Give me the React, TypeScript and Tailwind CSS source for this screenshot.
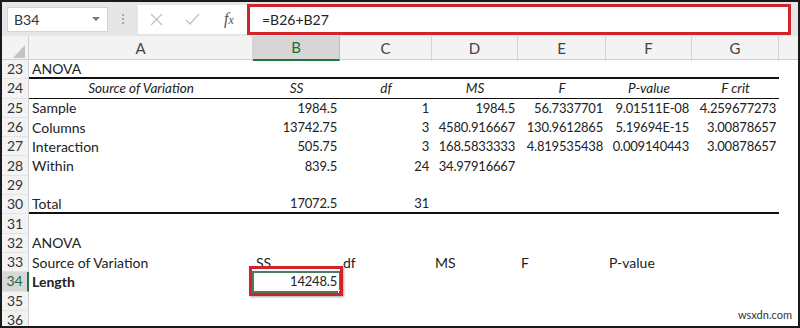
import React from 'react';

type Cell = {
  text?: string;
  align?: 'left' | 'right' | 'center';
  italic?: boolean;
  bold?: boolean;
};

type Row = {
  num: number;
  cells: Cell[]; // A..G
  border?: 'thick' | 'thin';
};

const L = (text: string, extra: Partial<Cell> = {}): Cell => ({ text, align: 'left', ...extra });
const R = (text: string): Cell => ({ text, align: 'right' });
const H = (text: string): Cell => ({ text, align: 'center', italic: true });
const E: Cell = {};

const rows: Row[] = [
  { num: 23, cells: [L('ANOVA'), E, E, E, E, E, E], border: 'thick' },
  {
    num: 24,
    cells: [H('Source of Variation'), H('SS'), H('df'), H('MS'), H('F'), H('P-value'), H('F crit')],
    border: 'thin',
  },
  { num: 25, cells: [L('Sample'), R('1984.5'), R('1'), R('1984.5'), R('56.7337701'), R('9.01511E-08'), R('4.259677273')] },
  { num: 26, cells: [L('Columns'), R('13742.75'), R('3'), R('4580.916667'), R('130.9612865'), R('5.19694E-15'), R('3.00878657')] },
  { num: 27, cells: [L('Interaction'), R('505.75'), R('3'), R('168.5833333'), R('4.819535438'), R('0.009140443'), R('3.00878657')] },
  { num: 28, cells: [L('Within'), R('839.5'), R('24'), R('34.97916667'), E, E, E] },
  { num: 29, cells: [E, E, E, E, E, E, E] },
  { num: 30, cells: [L('Total'), R('17072.5'), R('31'), E, E, E, E], border: 'thick' },
  { num: 31, cells: [E, E, E, E, E, E, E] },
  { num: 32, cells: [L('ANOVA'), E, E, E, E, E, E] },
  { num: 33, cells: [L('Source of Variation'), L('SS'), L('df'), L('MS'), L('F'), L('P-value'), E] },
  { num: 34, cells: [L('Length', { bold: true }), R('14248.5'), E, E, E, E, E] },
  { num: 35, cells: [E, E, E, E, E, E, E] },
  { num: 36, cells: [E, E, E, E, E, E, E] },
];

const cols = ['A', 'B', 'C', 'D', 'E', 'F', 'G'];

export default function App() {
  return (
    <div
      className="relative w-[800px] h-[328px] overflow-hidden border-2 border-[#1a1a1a] bg-white flex flex-col text-[#222]"
      style={{ fontFamily: 'Lato, "Open Sans", sans-serif' }}
    >
      {/* formula bar */}
      <div className="h-[34px] shrink-0 bg-[#e6e6e6] flex items-center pl-[5px]">
        <div className="w-[101px] h-[25px] bg-white border border-[#d4d4d4] flex items-center justify-between pl-[6px] pr-[7px]">
          <span className="text-[14px] text-[#333]">B34</span>
          <svg width="8" height="5" viewBox="0 0 8 5">
            <path d="M0 0 L8 0 L4 4 Z" fill="#777" />
          </svg>
        </div>
        <div className="w-[30px] flex flex-col items-center gap-[2px]">
          <span className="w-[2px] h-[2px] bg-[#aaa]" />
          <span className="w-[2px] h-[2px] bg-[#aaa]" />
          <span className="w-[2px] h-[2px] bg-[#aaa]" />
        </div>
        <div className="flex-1 h-[29px] bg-white flex items-center mr-[9px]">
          <div className="w-[109px] flex items-center pl-[12px] gap-[22px]">
            <svg width="13" height="13" viewBox="0 0 13 13">
              <path d="M1 1 L12 12 M12 1 L1 12" stroke="#c4c4c4" strokeWidth="1.4" />
            </svg>
            <svg width="15" height="13" viewBox="0 0 15 13">
              <path d="M1 7 L5 11 L14 1" stroke="#c4c4c4" strokeWidth="1.4" fill="none" />
            </svg>
            <span
              className="text-[16px] italic text-[#555] ml-[2px]"
              style={{ fontFamily: '"Liberation Serif", serif' }}
            >
              f<span className="text-[12px]">x</span>
            </span>
          </div>
          <div className="relative flex-1 h-full flex items-center pl-[15px]">
            <span className="text-[14px] text-[#222]">=B26+B27</span>
            <div className="absolute -top-[1px] left-0 -right-[2px] -bottom-[1px] border-[3px] border-[#d1232a]" />
          </div>
        </div>
      </div>

      {/* column headers */}
      <div className="h-[24px] shrink-0 grid grid-cols-[27px_224px_87px_92px_86px_88px_86px_87px_1fr] bg-[#f3f3f3] border-b border-[#cfcfcf]">
        <div className="relative border-r border-[#cfcfcf]">
          <svg className="absolute right-[3px] bottom-[3px]" width="12" height="13" viewBox="0 0 12 13">
            <path d="M12 0 L12 13 L0 13 Z" fill="#c3c3c3" />
          </svg>
        </div>
        {cols.map((c) => (
          <div
            key={c}
            className={
              c === 'B'
                ? 'flex items-center justify-center text-[15px] bg-[#d6d6d6] text-[#1f6b3e] border-r border-[#bdbdbd] border-b-2 border-b-[#217346]'
                : 'flex items-center justify-center text-[15px] text-[#444] border-r border-[#d4d4d4]'
            }
          >
            {c}
          </div>
        ))}
        <div />
      </div>

      {/* rows */}
      <div className="flex-1 flex flex-col">
        {rows.map((row) => (
          <div
            key={row.num}
            className="h-[19.3px] shrink-0 grid grid-cols-[27px_224px_87px_92px_86px_88px_86px_87px_1fr] leading-none"
          >
            <div
              className={
                row.num === 34
                  ? 'flex items-center justify-center text-[14px] bg-[#d8d8d8] text-[#1f6b3e] border-r-2 border-[#217346] border-b border-b-[#e2e2e2]'
                  : 'flex items-center justify-center text-[14px] bg-[#f3f3f3] text-[#333] border-r border-[#cfcfcf] border-b border-b-[#e2e2e2]'
              }
            >
              {row.num}
            </div>
            {row.cells.map((cell, i) => {
              const border =
                row.border === 'thick'
                  ? 'border-b-2 border-[#111]'
                  : row.border === 'thin'
                    ? 'border-b border-[#111]'
                    : '';
              const align =
                cell.align === 'right'
                  ? 'justify-end pr-[3px] text-[13px] tracking-[-0.2px]'
                  : cell.align === 'center'
                    ? 'justify-center text-[13.5px]'
                    : 'justify-start pl-[3px] text-[14px]';
              const selected = row.num === 34 && i === 1;
              return (
                <div
                  key={i}
                  className={`relative flex items-center whitespace-nowrap ${align} ${border} ${cell.italic ? 'italic' : ''} ${cell.bold ? 'font-bold' : ''}`}
                >
                  {cell.text}
                  {selected && (
                    <>
                      <div className="absolute -left-[1px] -top-[1px] -right-[1px] -bottom-[1px] border-2 border-[#4f7a5d]" />
                      <div className="absolute -right-[3px] -bottom-[3px] w-[5px] h-[5px] bg-[#217346] border border-white" />
                      <div className="absolute -left-[4px] -top-[6px] -right-[3px] -bottom-[4px] border-[3px] border-[#d1232a] shadow-[1px_1px_2px_rgba(0,0,0,0.35)]" />
                    </>
                  )}
                </div>
              );
            })}
            <div />
          </div>
        ))}
      </div>

      <div className="absolute left-[736px] top-[305px] text-[11px] text-[#333]">wsxdn.com</div>
    </div>
  );
}
